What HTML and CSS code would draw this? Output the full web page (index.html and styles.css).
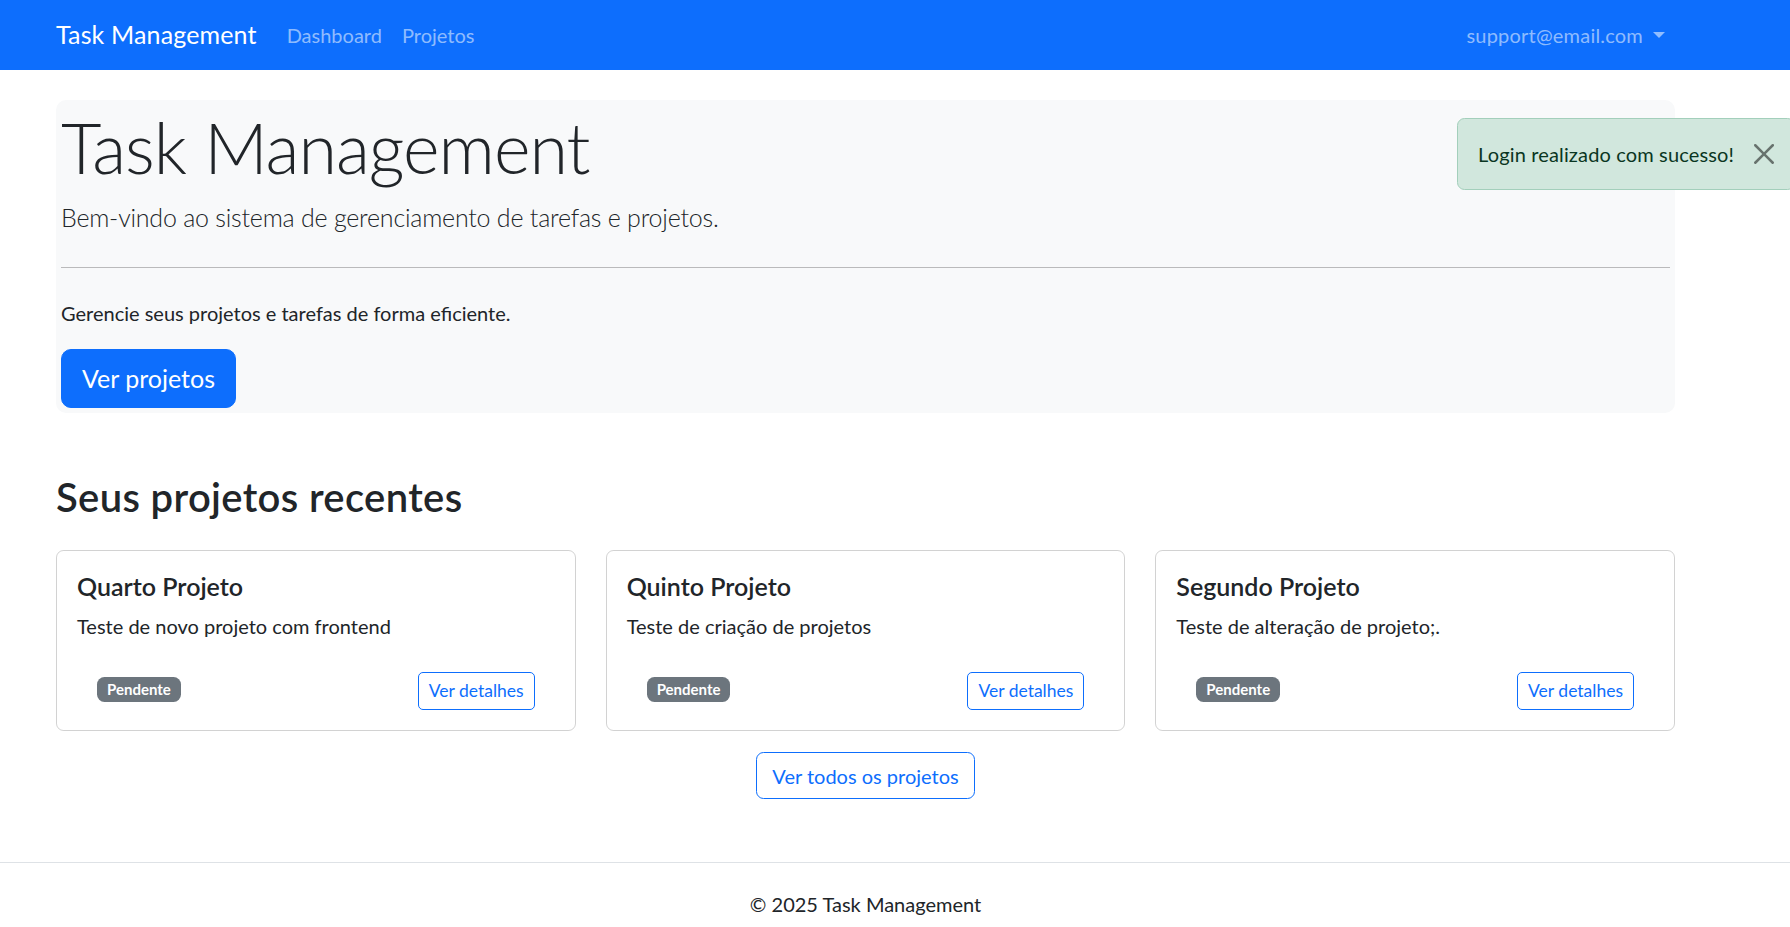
FILE: index.html
```html
<!DOCTYPE html>
<html lang="pt-BR">
<head>
<meta charset="utf-8">
<title>Task Management</title>
<link rel="stylesheet" href="styles.css">
</head>
<body>
<nav class="navbar">
  <div class="nav-inner">
    <a class="brand" href="#">Task Management</a>
    <ul class="nav-links">
      <li><a href="#">Dashboard</a></li>
      <li><a href="#">Projetos</a></li>
    </ul>
    <div class="nav-user"><a href="#" class="dropdown-toggle">support@email.com</a></div>
  </div>
</nav>

<div class="alert-toast">
  <span>Login realizado com sucesso!</span>
  <button class="btn-close" aria-label="Close">
    <svg viewBox="0 0 16 16" width="20" height="20"><path d="M.293.293a1 1 0 0 1 1.414 0L8 6.586 14.293.293a1 1 0 1 1 1.414 1.414L9.414 8l6.293 6.293a1 1 0 0 1-1.414 1.414L8 9.414l-6.293 6.293a1 1 0 0 1-1.414-1.414L6.586 8 .293 1.707a1 1 0 0 1 0-1.414z" fill="#000"/></svg>
  </button>
</div>

<main class="container">
  <section class="jumbo">
    <h1 class="display">Task Management</h1>
    <p class="lead">Bem-vindo ao sistema de gerenciamento de tarefas e projetos.</p>
    <hr class="divider">
    <p class="jumbo-text">Gerencie seus projetos e tarefas de forma eficiente.</p>
    <a class="btn btn-primary btn-lg" href="#">Ver projetos</a>
  </section>

  <h2 class="section-title">Seus projetos recentes</h2>

  <div class="cards">
    <div class="card">
      <h5 class="card-title">Quarto Projeto</h5>
      <p class="card-text">Teste de novo projeto com frontend</p>
      <div class="card-foot">
        <span class="badge">Pendente</span>
        <a class="btn btn-outline btn-sm" href="#">Ver detalhes</a>
      </div>
    </div>
    <div class="card">
      <h5 class="card-title">Quinto Projeto</h5>
      <p class="card-text">Teste de criação de projetos</p>
      <div class="card-foot">
        <span class="badge">Pendente</span>
        <a class="btn btn-outline btn-sm" href="#">Ver detalhes</a>
      </div>
    </div>
    <div class="card">
      <h5 class="card-title">Segundo Projeto</h5>
      <p class="card-text">Teste de alteração de projeto;.</p>
      <div class="card-foot">
        <span class="badge">Pendente</span>
        <a class="btn btn-outline btn-sm" href="#">Ver detalhes</a>
      </div>
    </div>
  </div>

  <div class="all-wrap">
    <a class="btn btn-outline" href="#">Ver todos os projetos</a>
  </div>
</main>

<footer class="footer">
  <div class="footer-inner">© 2025 Task Management</div>
</footer>
</body>
</html>
```
FILE: styles.css
```css
* { box-sizing: border-box; }

html, body {
  margin: 0;
  padding: 0;
  overflow: hidden;
}

body {
  font-family: Lato, "Liberation Sans", sans-serif;
  font-size: 20px;
  line-height: 1.5;
  color: #212529;
  background: #fff;
  position: relative;
  width: 1790px;
  height: 927px;
}

a { text-decoration: none; }

/* Navbar */
.navbar {
  background: #0d6efd;
  height: 70px;
  display: flex;
  align-items: center;
}
.nav-inner {
  margin-left: 56px;
  width: 1619px;
  display: flex;
  align-items: center;
}
.brand {
  color: #fff;
  font-size: 25px;
  line-height: 37.5px;
  margin-right: 20px;
  letter-spacing: 0.15px;
}
.nav-links {
  list-style: none;
  margin: 0;
  padding: 0;
  display: flex;
}
.nav-links a {
  display: block;
  padding: 8px 10px;
  color: rgba(255, 255, 255, 0.55);
}
.nav-user {
  margin-left: auto;
}
.nav-user a {
  display: block;
  padding: 8px 10px;
  color: rgba(255, 255, 255, 0.55);
  letter-spacing: 0.2px;
}
.dropdown-toggle::after {
  content: "";
  display: inline-block;
  margin-left: 10px;
  vertical-align: 5px;
  border-top: 6px solid;
  border-left: 6px solid transparent;
  border-right: 6px solid transparent;
}

/* Toast alert */
.alert-toast {
  position: absolute;
  left: 1457px;
  top: 118px;
  height: 72px;
  padding: 20px 60px 20px 20px;
  background: #d1e7dd;
  border: 1px solid #a3cfbb;
  border-radius: 7.5px;
  color: #0a3622;
  white-space: nowrap;
  line-height: 30px;
  letter-spacing: 0.15px;
}
.btn-close {
  position: absolute;
  top: 0;
  right: 0;
  width: 60px;
  height: 70px;
  border: 0;
  background: transparent;
  padding: 0;
  display: flex;
  align-items: center;
  justify-content: center;
  opacity: 0.5;
}
.btn-close svg { display: block; }

/* Main */
.container {
  margin-left: 56px;
  width: 1619px;
}
.jumbo {
  margin-top: 30px;
  background: #f8f9fa;
  border-radius: 10px;
  padding: 5px;
}
.display {
  font-size: 70px;
  font-weight: 300;
  line-height: 84px;
  margin: 0 0 10px;
  letter-spacing: -1px;
}
.lead {
  font-size: 25px;
  font-weight: 300;
  line-height: 37.5px;
  margin: 0;
  letter-spacing: -0.22px;
}
.divider {
  margin: 30px 0;
  border: 0;
  border-top: 1px solid rgba(0, 0, 0, 0.25);
  height: 0;
}
.jumbo-text {
  margin: 0 0 21px;
}

.btn {
  display: inline-block;
  border: 1px solid transparent;
  text-align: center;
  white-space: nowrap;
}
.btn-primary {
  background: #0d6efd;
  border-color: #0d6efd;
  color: #fff;
}
.btn-lg {
  font-size: 25px;
  line-height: 37.5px;
  padding: 10px 20px;
  border-radius: 10px;
}
.btn-outline {
  color: #0d6efd;
  border-color: #0d6efd;
  background: transparent;
  font-size: 20px;
  line-height: 30px;
  padding: 7.5px 15px;
  border-radius: 7.5px;
}
.btn-sm {
  font-size: 17.5px;
  line-height: 26.25px;
  padding: 5px 10px;
  border-radius: 5px;
}

.section-title {
  font-size: 40px;
  font-weight: 600;
  line-height: 48px;
  margin: 60px 0 29px;
  letter-spacing: 0.35px;
}

.cards {
  display: grid;
  grid-template-columns: repeat(3, 1fr);
  gap: 30px;
}
.card {
  border: 1px solid rgba(0, 0, 0, 0.176);
  border-radius: 7.5px;
  padding: 20px;
}
.card-title {
  font-size: 25px;
  font-weight: 600;
  line-height: 30px;
  margin: 0 0 10px;
}
.card-text {
  margin: 0 0 31px;
}
.card-foot {
  display: flex;
  justify-content: space-between;
  align-items: center;
  padding: 0 20px;
}
.badge {
  display: inline-block;
  background: #6c757d;
  color: #fff;
  font-size: 15px;
  font-weight: 700;
  line-height: 1;
  padding: 5px 10px;
  border-radius: 7.5px;
  margin-bottom: 4px;
}

.all-wrap {
  text-align: center;
  margin-top: 21px;
}

.footer {
  margin-top: 63px;
  border-top: 1px solid #dee2e6;
  padding-top: 26px;
  line-height: 30px;
}
.footer-inner {
  margin-left: 56px;
  width: 1619px;
  text-align: center;
}
```
